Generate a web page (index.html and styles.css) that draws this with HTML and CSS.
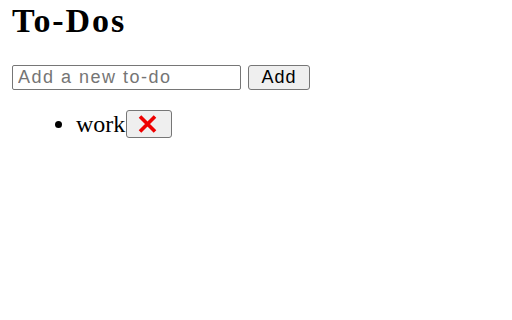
FILE: index.html
```html
<!DOCTYPE html>
<html>
<head>
<meta charset="utf-8">
<link rel="stylesheet" href="styles.css">
</head>
<body>
<h1 class="title">To-Dos</h1>
<form class="add-form">
  <input class="new-todo" type="text" placeholder="Add a new to-do">
  <button class="add-btn" type="button">Add</button>
</form>
<ul class="todo-list">
  <li class="todo-item">work<button class="del-btn" type="button"><svg class="del-icon" viewBox="0 0 19 18" width="19" height="18"><path d="M2 1.5 L17 16.5 M17 1.5 L2 16.5" stroke="#ee0000" stroke-width="3.6" stroke-linecap="butt" fill="none"/></svg></button></li>
</ul>
</body>
</html>
```
FILE: styles.css
```css
html, body {
  background: #ffffff;
}
body {
  margin: 0;
  padding: 4px 0 0 12px;
  font-family: "Liberation Serif", "Times New Roman", serif;
  color: #000000;
}
.title {
  margin: 0;
  font-size: 34px;
  line-height: 34px;
  font-weight: bold;
  letter-spacing: 1.9px;
}
.add-form {
  display: flex;
  align-items: flex-start;
  gap: 7px;
  margin: 27px 0 0 0;
}
.new-todo {
  box-sizing: border-box;
  width: 229px;
  height: 25px;
  margin: 0;
  padding: 0 5px;
  border: 1px solid #767676;
  border-radius: 2px;
  font-family: "Liberation Sans", Arial, sans-serif;
  font-size: 18px;
  letter-spacing: 1.5px;
  color: #000;
  background: #fff;
  outline: none;
}
.new-todo::placeholder {
  color: #757575;
}
.add-btn {
  box-sizing: border-box;
  width: 62px;
  height: 25px;
  margin: 0;
  padding: 0;
  border: 1px solid #767676;
  border-radius: 3px;
  background: #efefef;
  font-family: "Liberation Sans", Arial, sans-serif;
  font-size: 18px;
  letter-spacing: 1px;
  color: #000;
}
.todo-list {
  margin: 20px 0 0 0;
  padding: 0 0 0 64px;
  list-style: disc;
}
.todo-item {
  font-size: 24px;
  line-height: 28px;
}
.del-btn {
  box-sizing: border-box;
  display: inline-flex;
  align-items: center;
  justify-content: center;
  vertical-align: top;
  width: 46px;
  height: 28px;
  margin: 0 0 0 1px;
  padding: 0 4px 0 0;
  border: 1px solid #767676;
  border-radius: 3px;
  background: #efefef;
}
.del-icon {
  display: block;
}
```
